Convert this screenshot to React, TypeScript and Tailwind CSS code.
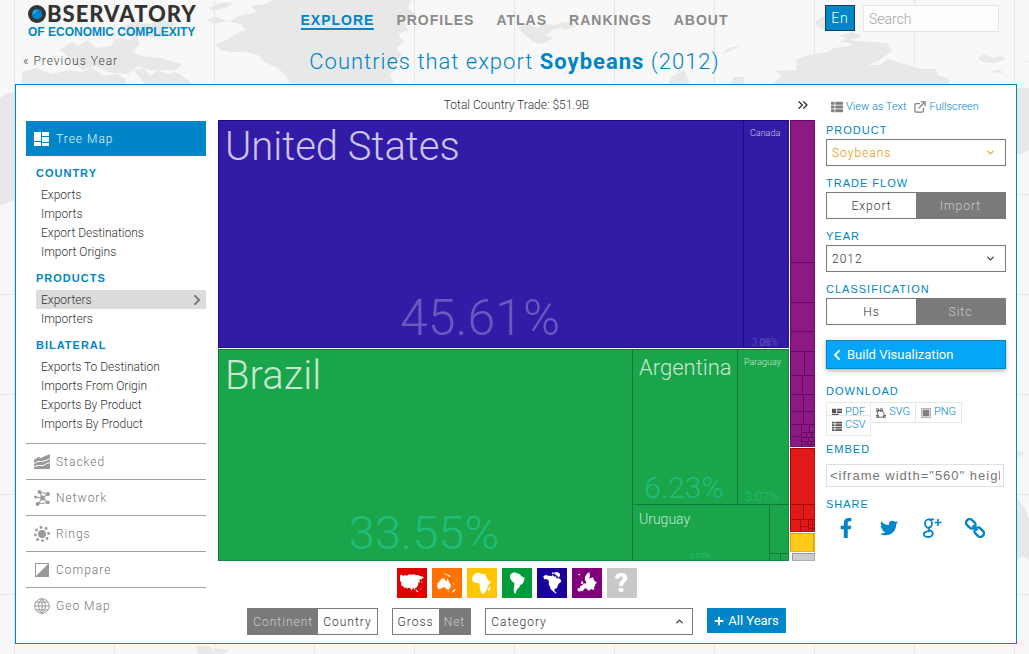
import { useState } from 'react'
import type { ReactNode } from 'react'
import { FaChevronLeft, FaChevronRight, FaFacebookF, FaPlus, FaThList, FaTwitter } from 'react-icons/fa'
import { ChevronDown, ChevronUp, ChevronsRight } from 'lucide-react'

const navLinks = ['Explore', 'Profiles', 'Atlas', 'Rankings', 'About']

const menu = [
  { title: 'Country', items: ['Exports', 'Imports', 'Export Destinations', 'Import Origins'] },
  { title: 'Products', items: ['Exporters', 'Importers'] },
  {
    title: 'Bilateral',
    items: ['Exports To Destination', 'Imports From Origin', 'Exports By Product', 'Imports By Product'],
  },
]

// x, y, width, height
type Rect = [number, number, number, number]

const regions: { name: string; fill: string; edge: string; frame: Rect; cells: Rect[] }[] = [
  {
    name: 'North America',
    fill: '#321ba6',
    edge: '#1f0a80',
    frame: [0, 0, 571, 228],
    cells: [[0, 0, 525, 228], [525, 0, 46, 228]],
  },
  {
    name: 'South America',
    fill: '#1ba54b',
    edge: '#0f7a38',
    frame: [0, 229, 571, 212],
    cells: [
      [0, 229, 414, 212], [414, 229, 105, 155], [519, 229, 52, 155],
      [414, 384, 137, 57], [551, 384, 20, 49], [551, 433, 11, 8], [562, 433, 9, 8],
    ],
  },
  {
    name: 'Europe',
    fill: '#8c1a85',
    edge: '#660860',
    frame: [572, 0, 25, 327],
    cells: [
      [572, 0, 25, 142], [572, 142, 25, 40], [572, 182, 25, 29], [572, 211, 25, 20],
      [572, 231, 14, 24], [586, 231, 11, 24], [572, 255, 12, 19], [584, 255, 13, 19],
      [572, 274, 13, 17], [585, 274, 12, 17], [572, 291, 13, 13], [585, 291, 12, 13],
      [572, 304, 11, 12], [572, 316, 11, 11], [583, 304, 8, 8], [591, 304, 6, 8],
      [583, 312, 5, 5], [588, 312, 5, 5], [593, 312, 4, 5], [583, 317, 7, 4], [590, 317, 7, 4],
      [583, 321, 6, 3], [589, 321, 4, 3], [593, 321, 4, 3], [583, 324, 8, 3], [591, 324, 6, 3],
    ],
  },
  {
    name: 'Asia',
    fill: '#e01919',
    edge: '#a80808',
    frame: [572, 328, 25, 84],
    cells: [
      [572, 328, 25, 56], [572, 384, 13, 15], [585, 384, 12, 15], [572, 399, 10, 13],
      [582, 399, 8, 7], [582, 406, 8, 6], [590, 399, 4, 5], [594, 399, 3, 5],
      [590, 404, 4, 4], [594, 404, 3, 4], [590, 408, 4, 4], [594, 408, 3, 4],
    ],
  },
  { name: 'Africa', fill: '#ffcb19', edge: '#d9a514', frame: [572, 413, 25, 19], cells: [[572, 413, 23, 19], [595, 413, 2, 19]] },
  { name: 'Other', fill: '#cccccc', edge: '#999999', frame: [574, 433, 23, 8], cells: [[574, 433, 23, 8]] },
]

const cellNames = [
  { text: 'United States', x: 7, y: 40, size: 40 },
  { text: 'Brazil', x: 7, y: 269, size: 40 },
  { text: 'Argentina', x: 421, y: 255, size: 22 },
  { text: 'Uruguay', x: 421, y: 404, size: 14 },
  { text: 'Canada', x: 532, y: 16, size: 9 },
  { text: 'Paraguay', x: 526, y: 245, size: 9 },
]

const cellShares = [
  { text: '45.61%', x: 262, y: 215, size: 50, fill: '#6a59be' },
  { text: '3.08%', x: 547, y: 226, size: 10, fill: '#6a59be' },
  { text: '0%', x: 547, y: 226, size: 9, fill: '#6a59be' },
  { text: '33.55%', x: 206, y: 429, size: 47, fill: '#20bd7c' },
  { text: '6.23%', x: 466, y: 378, size: 30, fill: '#20bd7c' },
  { text: '3.07%', x: 544, y: 381, size: 13, fill: '#20bd7c' },
  { text: '2.95%', x: 482, y: 438, size: 8, fill: '#22c983' },
]

function MapBackdrop() {
  return (
    <svg
      className="absolute inset-0 -z-10 h-full w-full"
      viewBox="0 0 1029 654"
      preserveAspectRatio="xMidYMin slice"
      aria-hidden="true"
    >
      <rect width="1029" height="654" fill="#f8f8f8" />
      <path
        d="M14.500 0V654M114.500 0V654M214.500 0V654M314.500 0V654M414.500 0V654M514.500 0V654M614.500 0V654M714.500 0V654M814.500 0V654M914.500 0V654M1014.500 0V654M0 194.500H1029M0 294.500H1029M0 394.500H1029M0 494.500H1029M0 594.500H1029"
        stroke="#e6e6e6"
      />
      <g fill="#e8e8e8">
        <path d="M215 44l12-4 8-6 10-4-4-6-12-2 10-6 18-4-6-6 14-2 8-4H412l-4 8 6 6-10 8 4 8-10 4 6 8-8 6 6 8-10 6 6 6-8 6 4 10H290l-4-8-8-8-14-6-4-6-14-4-16 0-10-2z" />
        <path d="M60 50l12-8 6 4 10-6 8 8 14-2 8-8 12 2 6-6 4 10-8 8 10 4 18 2 22 6-6 6-26 0-12-4-10 8-20-2-12-6-14 4z" />
        <path d="M22 72l14-4 16 6 18-4 10 2 12-4 12 8 14-2 8 6v6H22zM134 70l10-2 6 8 8-6 10 4 8-2 12 8 6 6h-48zM120 28l12-6 18 2 14-4 14 4-18 6 14 4-22 4-10-4-16 2zM208 8l12-5 14-1-6 5-14 4zM206 20l10-3 12 4-14 3z" />
        <path d="M518 28l8-4 12 4 6-4 22 2-14 4-6 6 8 2-12 6-8-2-8-6zM556 24l10-2 10 4-12 4zM668 84l4-8 12-6 6 14zM722 54l6-6 12-2-12 6zM730 84l4-7 10 0 0 7z" />
        <path d="M773 84l8-8-6-5 22-1-1-10 12-5 20-3 6-4 15-2 6-5 32 2 5 8-14 10-10 4 12 0 8-6 12 4 22 6 14 0 2 6 12 4-4 9zM815 22l8-6 6 6-4 8-8-4zM838 36l14-4 10 4-6 3zM840 42l8-6 8 6 0 2zM978 58l6-4 8 4 10-2 3 4-12 3-10-1zM990 72l8-3 6 4zM1014 60l15 1v1z" />
        <path d="M0 98l6-4 8-2v108l-14 6zM1017 88h12v62l-8 4h-4zM1017 498l8 10 4 12v40l-6-4-6 4zM1017 450l8 4-8 4zM196 646l14 0 6 8h-18zM214 648l16 2-6 4h-8z" />
      </g>
    </svg>
  )
}

function Logo() {
  return (
    <a href="#" aria-label="Observatory of Economic Complexity" className="block w-max">
      <div className="flex items-center gap-px font-[Lato,sans-serif] text-[22px] leading-6 font-black tracking-[1px] text-[#333]">
        <svg viewBox="0 0 18 18" className="h-[18px] w-[18px]" aria-hidden="true">
          <circle cx="9" cy="9" r="9" fill="#333" />
          <circle cx="9" cy="9" r="5.200" fill="#0085c8" />
          <path d="M5.800 8.500A3.600 3.600 0 0 1 8.500 5.500" stroke="#7cc4ea" strokeWidth="1.200" fill="none" />
        </svg>
        BSERVATORY
      </div>
      <div className="font-['Liberation_Sans',Arial,sans-serif] text-[12px] leading-3 font-bold text-[#0085c8]">
        OF ECONOMIC COMPLEXITY
      </div>
    </a>
  )
}

function Glyph({ children, box = '0 0 16 16', className = 'h-4 w-4' }: { children: ReactNode; box?: string; className?: string }) {
  return (
    <svg viewBox={box} className={className} fill="currentColor" aria-hidden="true">
      {children}
    </svg>
  )
}

const views = [
  {
    name: 'Stacked',
    icon: <path d="M0 6L4 3l3 1 4-2 3-1 2-1v4l-4 2-4 1-4 0-4 2zM0 10l4-2 4 0 4-1 4-2v3l-3 1-4 2-5 0-4 1zM0 13l5-1 4 0 4-2 3-1v6H0z" />,
  },
  {
    name: 'Network',
    icon: (
      <>
        <path d="M5.500 2L8.500 8M14 4L8.500 8M1.500 7L8.500 8M4 14L8.500 8M14 12.500L8.500 8M5.500 2L14 4M4 14l10-1.500" stroke="currentColor" strokeWidth="1.100" />
        <circle cx="5.500" cy="2" r="2" />
        <circle cx="14" cy="4" r="2" />
        <circle cx="1.500" cy="7" r="1.500" />
        <circle cx="8.500" cy="8" r="2.400" />
        <circle cx="3.500" cy="14" r="2" />
        <circle cx="14" cy="12.500" r="1.800" />
      </>
    ),
  },
  {
    name: 'Rings',
    icon: (
      <>
        <circle cx="8" cy="8" r="4" />
        <circle cx="7" cy="1.500" r="1.400" />
        <circle cx="12" cy="2.500" r="1.400" />
        <circle cx="14.600" cy="7.500" r="1.400" />
        <circle cx="13" cy="12.500" r="1.400" />
        <circle cx="8.500" cy="14.600" r="1.400" />
        <circle cx="3.500" cy="13.500" r="1.400" />
        <circle cx="1.400" cy="9" r="1.400" />
        <circle cx="2.500" cy="4" r="1.400" />
      </>
    ),
  },
  {
    name: 'Compare',
    icon: <path fillRule="evenodd" d="M1 1h14v14H1zM2 2v12L14 2z" />,
  },
  {
    name: 'Geo Map',
    icon: (
      <path
        d="M8 .700a7.300 7.300 0 1 0 0 14.600A7.300 7.300 0 1 0 8 .700zM8 .700v14.600M.700 8h14.600M2 4.200h12M2 11.800h12M8 .700C3.500 4 3.500 12 8 15.300M8 .700c4.500 3.300 4.500 11.300 0 14.600"
        fill="none"
        stroke="currentColor"
        strokeWidth="1"
      />
    ),
  },
]

// silhouettes on the coloured continent buttons
const continents = [
  {
    name: 'Asia',
    color: 'bg-[#df0000]',
    icon: <path d="M9 22l4-2 7 4 4-3 6 2 6-4 6 1 10-1 4 3 8-1 4 3 10 2 3 4-5 1-3 5-2-3-4 3 2 5-3 4-3-2 1 5-2 6-4 5-4 0 1 5-3 1-2-5-4 2-3 6-3-7-5-2-5 3-3-4-6 2-2-5-5-2-2-6 2-4-5-3zM58 64l3 5 5 2-4 2-6-5zM71 58l2 5-2 3zM74 38l2 4-3 3z" />,
  },
  {
    name: 'Oceania',
    color: 'bg-[#ff7200]',
    icon: <path d="M15 47l6-4 3-6 8-6 6 1 1 5 5 2 2-8 3 6 3 7 5 6-1 9-7 6-6-2-4-5-9 1-6 5-6-1zM36 16l8 3 9 3 5 4-7 0-6-5-8-2zM68 62l3 3-5 6-9 4 5-6zM46 68l5 0-2 4zM72 34l3 3-2 1zM64 46l4 4-1 1-5-4z" />,
  },
  {
    name: 'Africa',
    color: 'bg-[#ffc600]',
    icon: <path d="M26 16l12-2 4 4 12 0 4 8 6 12 8 1-4 8-6 7-1 9-5 5-2 7-6 3-5-2-3-10-2-7 1-8-4-6-9 0-9-5-2-9 4-9zM69 55l2 2-3 11-4 1 0-8z" />,
  },
  {
    name: 'South America',
    color: 'bg-[#009b3a]',
    icon: <path d="M29 16l8-3 9 3 8 3 4 6 10 4-2 9-4 9-7 4-3 7-6 5-3 6-2 8-5-3-1-11 2-10 0-8-7-5-6-10 0-8z" />,
  },
  {
    name: 'North America',
    color: 'bg-[#180099]',
    icon: <path d="M19 24l8-3 8 2 9 1 3-3 5 5 5-1 1 6 8 0 6 5 0 6-7 5-3 7-3 7-6 2-1 5 4 4 4 4-5 0-7-6-7-6-2-7-4-8 1-8-3-6-7-2-5 1zM46 13l5 1-2 5-5-1zM53 12l10 1 6 5 0 6-5 5-4-6-8-5z" />,
  },
  {
    name: 'Europe',
    color: 'bg-[#80007b]',
    icon: <path d="M38 34l2-10 6-8 6-3 2 8-2 11 5-2 6-2 4 10 8 6-5 4-1 7-4 3 3 6-6 1-5-3-4 6-3-4 0 6-6-8-4-1-4 3-4 6-6-1-3 2-6-3 0-7 8-1-1-5 7-3 5-6 5 1 2-5zM29 38l3 2 2 7-7 1 1-5zM18 19l6-1 1 3-5 1z" />,
  },
]

function Toggle({ options, active, onChange, grow }: { options: string[]; active: string; onChange: (v: string) => void; grow?: boolean }) {
  return (
    <div className="flex h-[27px] border border-[#7a7a7a] bg-white">
      {options.map((o) => (
        <button
          key={o}
          type="button"
          aria-pressed={o === active}
          onClick={() => onChange(o)}
          className={`px-[5px] tracking-[1px] ${grow ? 'flex-1' : ''} ${
            o === active ? 'bg-white text-[#333]' : 'bg-[#7a7a7a] text-[#ccc]'
          }`}
        >
          {o}
        </button>
      ))}
    </div>
  )
}

function Label({ children, htmlFor }: { children: string; htmlFor?: string }) {
  return (
    <label
      htmlFor={htmlFor}
      className="block h-[26px] pt-2 font-['Liberation_Sans',Arial,sans-serif] text-[11px] leading-[18px] tracking-[1px] text-[#0085c8] uppercase"
    >
      {children}
    </label>
  )
}

function Treemap() {
  return (
    <svg viewBox="0 0 597 441" className="block w-full" role="img" aria-label="Countries that export Soybeans">
      {regions.map((r) => (
        <svg
          key={r.name}
          x={r.frame[0]}
          y={r.frame[1]}
          width={r.frame[2]}
          height={r.frame[3]}
          viewBox={r.frame.join(' ')}
          fill={r.fill}
          stroke={r.edge}
          shapeRendering="crispEdges"
        >
          {r.cells.map(([x, y, w, h]) => (
            <rect key={`${x}-${y}`} x={x + 0.5} y={y + 0.5} width={w} height={h} />
          ))}
          <rect
            x={r.frame[0] + 0.5}
            y={r.frame[1] + 0.5}
            width={r.frame[2] - 1}
            height={r.frame[3] - 1}
            fill="none"
            strokeOpacity="0.6"
          />
        </svg>
      ))}
      <g>
        {cellNames.map((c) => (
          <text key={c.text} x={c.x} y={c.y} fontSize={c.size} fill="#fff" fillOpacity="0.75">
            {c.text}
          </text>
        ))}
        {cellShares.map((c) => (
          <text key={c.text} x={c.x} y={c.y} fontSize={c.size} fill={c.fill} textAnchor="middle">
            {c.text}
          </text>
        ))}
      </g>
    </svg>
  )
}

function Sidebar() {
  return (
    <aside className="mr-3 w-[180px] shrink-0 pt-9">
      <button type="button" className="flex h-[35px] w-full items-center gap-1.5 bg-[#0085c8] px-2 tracking-[1px] text-[#e5f3fa]">
        <Glyph className="h-4 w-4 text-white">
          <path d="M0 1h7v9H0zM8 1h7v4H8zM8 6h7v5H8zM0 11h7v4H0zM8 12h7v3H8z" />
        </Glyph>
        Tree Map
      </button>
      {menu.map((section) => (
        <div key={section.title} className="pl-2.5">
          <h2 className="h-[29px] pt-[5px] font-['Liberation_Sans',Arial,sans-serif] text-[11px] leading-6 font-bold tracking-[1px] text-[#0085c8] uppercase">
            {section.title}
          </h2>
          {section.items.map((item) => (
            <a
              key={item}
              href="#"
              className={`flex h-[19px] items-center justify-between px-[5px] text-[#333] ${
                item === 'Exporters' ? 'bg-[#dcdcdc]' : ''
              }`}
            >
              {item}
              {item === 'Exporters' && <FaChevronRight className="h-3 w-2 text-[#777]" />}
            </a>
          ))}
        </div>
      ))}
      <div className="mt-2.5">
        {views.map((view) => (
          <button
            key={view.name}
            type="button"
            className="flex h-9 w-full items-center gap-1.5 border-t border-[#a0a0a0] px-2 pt-px tracking-[1px] text-[#777]"
          >
            <Glyph className="h-4 w-4 text-[#999]">{view.icon}</Glyph>
            {view.name}
          </button>
        ))}
      </div>
    </aside>
  )
}

function Chart() {
  const [depth, setDepth] = useState('Country')
  const [amount, setAmount] = useState('Gross')

  return (
    <main className="min-w-0 flex-1">
      <div className="relative flex h-[35px] items-center justify-center pt-1 text-[#333]">
        Total Country Trade: $51.9B
        <button type="button" aria-label="Hide controls" className="absolute right-1">
          <ChevronsRight size={16} strokeWidth={2} />
        </button>
      </div>
      <Treemap />
      <div className="mt-[7px] flex justify-center gap-[5px]">
        {continents.map((c) => (
          <button key={c.name} type="button" aria-label={c.name} className={`h-[30px] w-[30px] text-white ${c.color}`}>
            <Glyph box="0 0 90 90" className="h-[30px] w-[30px]">
              {c.icon}
            </Glyph>
          </button>
        ))}
        <button type="button" className="h-[30px] w-[30px] bg-[#c8c8c8] text-[26px] leading-[30px] font-black text-white">
          ?
        </button>
      </div>
      <div className="mt-2.5 flex justify-center gap-[14px]">
        <Toggle options={['Continent', 'Country']} active={depth} onChange={setDepth} />
        <Toggle options={['Gross', 'Net']} active={amount} onChange={setAmount} />
        <div className="relative w-[208px]">
          <select aria-label="Category" className="h-[27px] w-full appearance-none border border-[#7a7a7a] bg-white px-[5px] tracking-[1px] text-[#333]">
            <option>Category</option>
          </select>
          <ChevronUp size={11} strokeWidth={3} className="pointer-events-none absolute top-2 right-2" />
        </div>
        <button type="button" className="flex h-[25px] items-center gap-1 bg-[#0085c8] px-[7px] text-[13px] font-normal text-white">
          <FaPlus size={10} />
          All Years
        </button>
      </div>
    </main>
  )
}

const downloads = [
  { name: 'PDF', icon: <path d="M0 1h5v5H0zM6 1h6v2H6zM6 4h6v2H6zM0 7h8v2H0zM0 10h5v2H0z" /> },
  {
    name: 'SVG',
    icon: <path d="M2 3v8h8M2 3h4q4 1 4 8M0 1h3v3H0zM5 1h3v3H5zM0 9h3v3H0zM9 9h3v3H9z" fill="none" stroke="currentColor" />,
  },
  {
    name: 'PNG',
    icon: (
      <>
        <path d="M2 2h8v8H2z" fill="#808080" />
        <path d="M.500.500h11v11H.500z" fill="none" stroke="#999" />
      </>
    ),
  },
  { name: 'CSV', icon: <path d="M0 1h3v2H0zM4 1h8v2H4zM0 4h3v2H0zM4 4h8v2H4zM0 7h3v2H0zM4 7h8v2H4zM0 10h3v2H0zM4 10h8v2H4z" /> },
]

function Controls() {
  const [flow, setFlow] = useState('Export')
  const [classification, setClassification] = useState('Hs')

  return (
    <aside className="ml-[11px] w-[180px] shrink-0">
      <div className="flex h-7 items-center pt-4 pl-[5px] text-[11px] text-[#0085c8]">
        <FaThList size={12} className="mr-[3px] text-[#808080]" />
        <a href="#">View as Text</a>
        <Glyph box="0 0 14 14" className="mr-[3px] ml-2 h-3 w-3 text-[#808080]">
          <path d="M7 3H2.500Q1 3 1 4.500v7Q1 13 2.500 13h7Q11 13 11 11.500V8M5.500 8.500L12 2M8 1h5v5" fill="none" stroke="currentColor" strokeWidth="1.400" />
        </Glyph>
        <a href="#">Fullscreen</a>
      </div>

      <Label htmlFor="product">Product</Label>
      <div className="relative">
        <select id="product" className="h-[27px] w-full appearance-none border border-[#7a7a7a] bg-white px-[5px] tracking-[1px] text-[#d99a00]">
          <option>Soybeans</option>
        </select>
        <ChevronDown size={11} strokeWidth={3} className="pointer-events-none absolute top-2 right-2.5 text-[#e0b030]" />
      </div>
      <Label>Trade Flow</Label>
      <Toggle options={['Export', 'Import']} active={flow} onChange={setFlow} grow />
      <Label htmlFor="year">Year</Label>
      <div className="relative">
        <select id="year" className="h-[27px] w-full appearance-none border border-[#7a7a7a] bg-white px-[5px] tracking-[1px] text-[#333]">
          <option>2012</option>
        </select>
        <ChevronDown size={11} strokeWidth={3} className="pointer-events-none absolute top-2 right-2.5" />
      </div>
      <Label>Classification</Label>
      <Toggle options={['Hs', 'Sitc']} active={classification} onChange={setClassification} grow />

      <button
        type="button"
        className="mt-[15px] mb-[5px] flex h-[29px] w-full items-center gap-1.5 border border-[#0085c8] bg-[#05a5f8] px-1.5 text-[13px] font-normal text-white shadow-[0_2px_4px_rgba(0,0,0,0.3)]"
      >
        <FaChevronLeft className="h-3 w-2" />
        Build Visualization
      </button>

      <Label>Download</Label>
      <div className="mt-0.5 flex flex-wrap pl-px">
        {downloads.map((d) => (
          <a
            key={d.name}
            href="#"
            className="relative -mb-2 -ml-px flex h-[21px] items-center gap-[3px] border border-[#e6e6e6] bg-white px-[5px] text-[11px] text-[#0085c8]"
          >
            <Glyph box="0 0 12 12" className="h-2.5 w-2.5 text-[#555]">
              {d.icon}
            </Glyph>
            {d.name}
          </a>
        ))}
      </div>
      <div className="mt-1">
        <Label htmlFor="embed">Embed</Label>
      </div>
      <input
        id="embed"
        readOnly
        value={'<iframe width="560" height="315" src="#"></iframe>'}
        className="mt-1.5 block h-[23px] w-[178px] border border-[#e0e0e0] px-[3px] font-['Liberation_Sans',Arial,sans-serif] text-[13px] tracking-[1px] text-[#777]"
      />
      <Label>Share</Label>
      <div className="flex h-[30px] items-center gap-[23px] pl-2.5 text-[#0085c8]">
        <a href="#" aria-label="Facebook" className="flex w-5 justify-center">
          <FaFacebookF size={20} />
        </a>
        <a href="#" aria-label="Twitter" className="flex w-5 justify-center">
          <FaTwitter size={18} />
        </a>
        <a href="#" aria-label="Google Plus">
          <Glyph box="0 0 20 20" className="h-5 w-5">
            <g fill="none" stroke="currentColor" strokeWidth="1.800">
              <ellipse cx="6.500" cy="5.500" rx="3.500" ry="4.200" />
              <path d="M7 1.300h5M9 8.500C5 10.500 6 11.500 8.500 12.500c4 2 2.500 6.500-2.500 6.500-6 0-6-5.500 2-6" />
              <path d="M16 1v7M12.500 4.500h7" strokeWidth="1.600" />
            </g>
          </Glyph>
        </a>
        <a href="#" aria-label="Permalink">
          <Glyph box="0 0 20 20" className="h-5 w-5">
            <g fill="none" stroke="currentColor" strokeWidth="2.400" transform="rotate(45 10 10)">
              <rect x="-1" y="6.500" width="10" height="7" rx="3" />
              <rect x="11" y="6.500" width="10" height="7" rx="3" />
              <path d="M6.500 10h7" />
            </g>
          </Glyph>
        </a>
      </div>
    </aside>
  )
}

export default function App() {
  return (
    <div className="relative isolate min-h-screen overflow-hidden bg-[#f8f8f8] pr-3 pb-2.5 pl-[15px] font-[Roboto,sans-serif] text-[12px] font-light text-[#444]">
      <MapBackdrop />
      <header className="grid h-11 grid-cols-[1fr_auto_1fr] items-start pr-[3px]">
        <div className="pt-0.5 pl-[13px]">
          <Logo />
        </div>
        <nav className="flex gap-[22px] pt-3 font-['Liberation_Sans',Arial,sans-serif] text-[14px] leading-4 font-bold tracking-[1px] uppercase">
          {navLinks.map((link) => (
            <a
              key={link}
              href="#"
              className={link === 'Explore' ? 'border-b-2 border-[#0085c8] text-[#0085c8]' : 'text-[#8a8a8a]'}
            >
              {link}
            </a>
          ))}
        </nav>
        <div className="flex justify-end gap-2 pt-[5px] pr-[15px] text-[14px]">
          <button type="button" className="h-[26px] w-[30px] border border-[#10405c] bg-[#0085c8] tracking-[1px] text-white">
            En
          </button>
          <input
            aria-label="Search"
            placeholder="Search"
            className="h-[27px] w-[136px] border border-[#e6e6e6] bg-[#fdfdfb] px-[5px] placeholder:text-[#a5a5a5]"
          />
        </div>
      </header>
      <div className="grid h-10 grid-cols-[1fr_auto_1fr] items-center pr-[3px] pb-1.5">
        <a href="#" className="pl-2 tracking-[1px] text-[#444]">
          « Previous Year
        </a>
        <h1 className="text-[22px] tracking-[1px] text-[#0085c8]">
          Countries that export <b className="font-bold">Soybeans</b> (2012)
        </h1>
      </div>
      <div className="flex min-h-[560px] border border-[#0085c8] bg-white px-2.5">
        <Sidebar />
        <Chart />
        <Controls />
      </div>
    </div>
  )
}
